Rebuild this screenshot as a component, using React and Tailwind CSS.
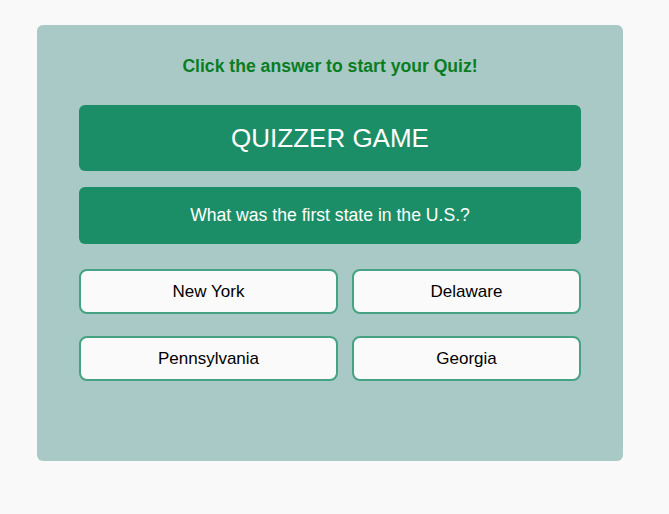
export default function App() {
  const answers = ["New York", "Delaware", "Pennsylvania", "Georgia"];

  return (
    <div className="min-h-screen bg-[#f9f9f9] pt-[25px] font-['Liberation_Sans',Arial,sans-serif]">
      <div className="ml-[37px] w-[586px] h-[436px] bg-[#a8c9c5] rounded-md px-[42px] pt-[30px]">
        <h1 className="text-center text-[17.6px] font-bold text-[#0a7d22] leading-[22px]">
          Click the answer to start your Quiz!
        </h1>

        <div className="mt-[28px] h-[66px] bg-[#1c8e67] rounded-md flex items-center justify-center">
          <h2 className="text-white text-[26px]">QUIZZER GAME</h2>
        </div>

        <div className="mt-[16px] h-[57px] bg-[#1c8e67] rounded-md flex items-center justify-center">
          <p className="text-white text-[17.6px]">What was the first state in the U.S.?</p>
        </div>

        <div className="mt-[25px] grid grid-cols-[259px_229px] gap-x-[14px] gap-y-[22px]">
          {answers.map((a) => (
            <button
              key={a}
              className="h-[45px] bg-[#fafafa] border-2 border-[#45a282] rounded-lg text-[17px] text-black"
            >
              {a}
            </button>
          ))}
        </div>
      </div>
    </div>
  );
}
